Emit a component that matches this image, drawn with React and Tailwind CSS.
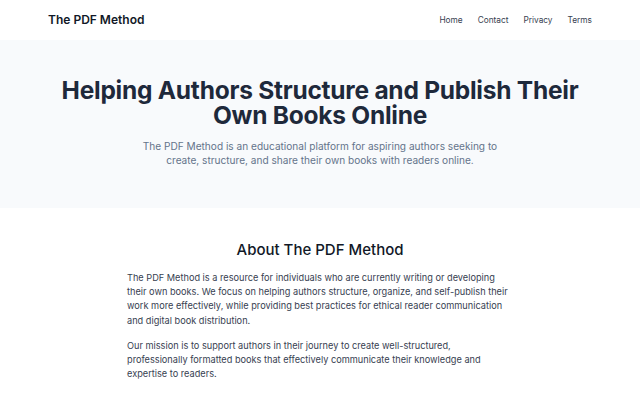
export default function App() {
  return (
    <div className="min-h-screen bg-white font-['Inter',sans-serif] text-[#1f2937]">
      <header className="flex h-10 items-center justify-between px-12">
        <div className="text-[12px] font-semibold text-[#111827]">The PDF Method</div>
        <nav className="flex gap-[15px] text-[8.3px] text-[#374151]">
          <a>Home</a>
          <a>Contact</a>
          <a>Privacy</a>
          <a>Terms</a>
        </nav>
      </header>

      <section className="flex h-[168px] flex-col items-center bg-[#f8fafc] px-12 pt-[38px] text-center">
        <h1 className="text-[24.5px] font-bold leading-[24.5px] tracking-[-0.01em] text-[#1e293b]">
          Helping Authors Structure and Publish Their
          <br />
          Own Books Online
        </h1>
        <p className="mt-[12px] w-[370px] text-[10.1px] leading-[14px] text-[#64748b]">
          The PDF Method is an educational platform for aspiring authors seeking to create, structure, and share their own books with readers online.
        </p>
      </section>

      <section className="mx-auto w-[386px] pt-[31px]">
        <h2 className="text-center text-[15px] font-medium text-[#111827]">About The PDF Method</h2>
        <p className="mt-[9px] text-[9.2px] leading-[14.4px] text-[#374151]">
          The PDF Method is a resource for individuals who are currently writing or developing their own books. We focus on helping authors structure, organize, and self-publish their work more effectively, while providing best practices for ethical reader communication and digital book distribution.
        </p>
        <p className="mt-[10.5px] text-[9.2px] leading-[14.4px] text-[#374151]">
          Our mission is to support authors in their journey to create well-structured, professionally formatted books that effectively communicate their knowledge and expertise to readers.
        </p>
      </section>
    </div>
  )
}
